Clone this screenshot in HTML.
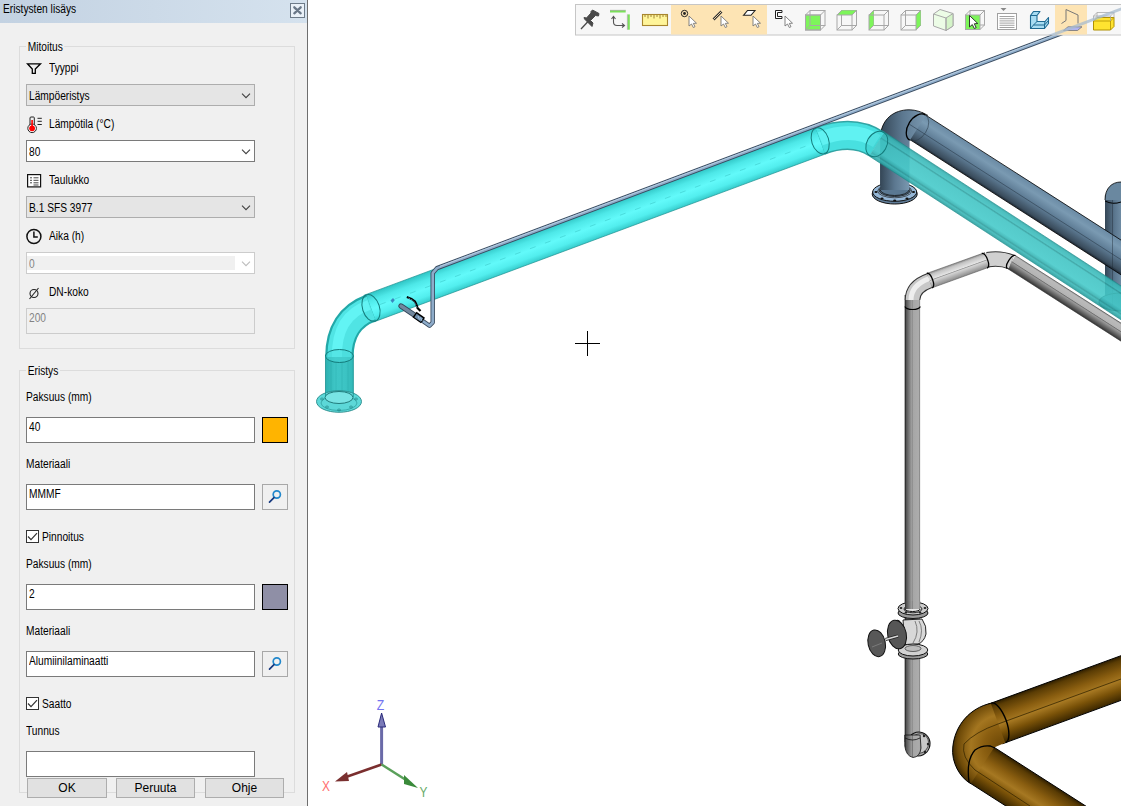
<!DOCTYPE html>
<html><head><meta charset="utf-8">
<style>
*{margin:0;padding:0;box-sizing:border-box}
html,body{width:1121px;height:806px;overflow:hidden;background:#fff;font-family:"Liberation Sans",sans-serif;font-size:12px;color:#000}
.a{position:absolute}
#panel{z-index:5;left:0;top:0;width:308px;height:806px;background:#f0f0f0;border-right:1px solid #6e6e6e}
#title{left:0;top:0;width:307px;height:23px;background:linear-gradient(90deg,#c3d2e2,#d5e2ee)}
.t{position:absolute;white-space:nowrap;line-height:14px;transform:scaleX(.85);transform-origin:0 0}
.grp{position:absolute;border:1px solid #dcdcdc}
.gl{position:absolute;background:#f0f0f0;padding:0 2px;line-height:14px;transform:scaleX(.85);transform-origin:0 0}
.cb{position:absolute;height:22px;border:1px solid #adadad;background:#e5e5e5}
.cbw{position:absolute;height:22px;border:1px solid #7a7a7a;background:#fff}
.tb{position:absolute;border:1px solid #7a7a7a;background:#fff;height:26px}
.tbd{position:absolute;border:1px solid #cccccc;background:#f0f0f0;height:26px}
.btn{position:absolute;height:20px;border:1px solid #adadad;background:#e1e1e1;text-align:center;line-height:18px}
#view{left:308px;top:0;width:813px;height:806px;background:#fff;overflow:hidden}
</style></head><body>
<div id="panel" class="a">
  <div id="title" class="a"></div>
  <div class="t" style="left:3px;top:2px">Eristysten lisäys</div>
  <div class="a" style="left:290px;top:3px;width:15px;height:15px;border:1px solid #6d7b89;background:#eaf1f8"></div>

  <div class="grp" style="left:19px;top:46px;width:276px;height:303px"></div>
  <div class="gl" style="left:26px;top:40px">Mitoitus</div>

  <div class="t" style="left:49px;top:61px">Tyyppi</div>
  <div class="cb" style="left:26px;top:84px;width:229px"></div>
  <div class="t" style="left:29px;top:89px">Lämpöeristys</div>

  <div class="t" style="left:49px;top:117px">Lämpötila (°C)</div>
  <div class="cbw" style="left:26px;top:140px;width:229px"></div>
  <div class="t" style="left:29px;top:145px">80</div>

  <div class="t" style="left:49px;top:173px">Taulukko</div>
  <div class="cb" style="left:26px;top:196px;width:229px"></div>
  <div class="t" style="left:29px;top:201px">B.1 SFS 3977</div>

  <div class="t" style="left:49px;top:229px">Aika (h)</div>
  <div class="a" style="left:26px;top:252px;width:229px;height:22px;border:1px solid #cccccc;background:#fff"></div>
  <div class="a" style="left:27px;top:256px;width:208px;height:14px;background:#f0f0f0"></div>
  <div class="t" style="left:29px;top:257px;color:#838383">0</div>

  <div class="t" style="left:49px;top:285px">DN-koko</div>
  <div class="tbd" style="left:26px;top:308px;width:229px"></div>
  <div class="t" style="left:29px;top:311px;color:#838383">200</div>

  <div class="grp" style="left:19px;top:370px;width:276px;height:423px"></div>
  <div class="gl" style="left:26px;top:364px">Eristys</div>

  <div class="t" style="left:26px;top:390px">Paksuus (mm)</div>
  <div class="tb" style="left:26px;top:417px;width:229px"></div>
  <div class="t" style="left:29px;top:420px">40</div>
  <div class="a" style="left:262px;top:417px;width:26px;height:26px;border:1px solid #000;background:#ffb400"></div>

  <div class="t" style="left:26px;top:457px">Materiaali</div>
  <div class="tb" style="left:26px;top:484px;width:229px"></div>
  <div class="t" style="left:29px;top:487px">MMMF</div>
  <div class="a" style="left:262px;top:484px;width:26px;height:26px;border:1px solid #a8a8a8;background:#f0f0f0"></div>

  <div class="a" style="left:26px;top:530px;width:13px;height:13px;border:1px solid #333;background:#fff"></div>
  <div class="t" style="left:42px;top:530px">Pinnoitus</div>

  <div class="t" style="left:26px;top:557px">Paksuus (mm)</div>
  <div class="tb" style="left:26px;top:584px;width:229px"></div>
  <div class="t" style="left:29px;top:587px">2</div>
  <div class="a" style="left:262px;top:584px;width:26px;height:26px;border:1px solid #000;background:#8f8fa6"></div>

  <div class="t" style="left:26px;top:624px">Materiaali</div>
  <div class="tb" style="left:26px;top:651px;width:229px"></div>
  <div class="t" style="left:29px;top:654px">Alumiinilaminaatti</div>
  <div class="a" style="left:262px;top:651px;width:26px;height:26px;border:1px solid #a8a8a8;background:#f0f0f0"></div>

  <div class="a" style="left:26px;top:697px;width:13px;height:13px;border:1px solid #333;background:#fff"></div>
  <div class="t" style="left:42px;top:697px">Saatto</div>

  <div class="t" style="left:26px;top:724px">Tunnus</div>
  <div class="tb" style="left:26px;top:751px;width:229px"></div>


  <svg class="a" style="left:0;top:0" width="308" height="806">
    <!-- close X -->
    <path d="M294.3,7.3 L300.7,13.3 M300.7,7.3 L294.3,13.3" stroke="#6a7888" stroke-width="2.3" stroke-linecap="round"/>
    <!-- funnel -->
    <path d="M27.5,63.8 L40.5,63.8 L35.3,69 L35.3,73.3 L32.3,73.3 L32.3,69 Z" fill="none" stroke="#000" stroke-width="1.3" stroke-linejoin="miter"/>
    <!-- thermometer -->
    <path d="M30,125 L30,118 Q30,117 31,117 L33.5,117 Q34.3,117 34.3,118 L34.3,125" fill="none" stroke="#222" stroke-width="1"/>
    <circle cx="32.1" cy="128.3" r="4.3" fill="#fff" stroke="#222" stroke-width="1"/>
    <path d="M32.1,120 L32.1,126" stroke="#f00" stroke-width="1.6"/>
    <circle cx="32.1" cy="128.3" r="2.9" fill="#f00"/>
    <path d="M37.5,118.3 L41.8,118.3 M37.5,121.3 L41.8,121.3 M37.5,124.5 L41.8,124.5" stroke="#222" stroke-width="1"/>
    <!-- table -->
    <rect x="27.6" y="174.6" width="13" height="12.3" fill="#fff" stroke="#111" stroke-width="1.2"/>
    <path d="M30,177.8 L32,177.8 M33.5,177.8 L38.5,177.8 M30,180.3 L32,180.3 M33.5,180.3 L38.5,180.3 M30,182.8 L32,182.8 M33.5,182.8 L38.5,182.8 M33.5,185 L38.5,185" stroke="#333" stroke-width="0.9"/>
    <!-- clock -->
    <circle cx="33.9" cy="236.5" r="7" fill="none" stroke="#111" stroke-width="1.5"/>
    <path d="M33.9,231.5 L33.9,237 L37.8,237" fill="none" stroke="#111" stroke-width="1.5"/>
    <!-- diameter -->
    <circle cx="34" cy="293.5" r="4" fill="none" stroke="#222" stroke-width="1.1"/>
    <path d="M29.5,299 L38.5,288" stroke="#222" stroke-width="1.1"/>
    <!-- chevrons -->
    <path d="M242,93.7 L246,97.7 L250,93.7" fill="none" stroke="#404040" stroke-width="1.1"/>
    <path d="M242,149.7 L246,153.7 L250,149.7" fill="none" stroke="#404040" stroke-width="1.1"/>
    <path d="M242,205.7 L246,209.7 L250,205.7" fill="none" stroke="#404040" stroke-width="1.1"/>
    <path d="M242,261.7 L246,265.7 L250,261.7" fill="none" stroke="#bdbdbd" stroke-width="1.1"/>
    <!-- checks -->
    <path d="M28,536.5 L31,539.7 L37,533.2" fill="none" stroke="#333" stroke-width="1.2"/>
    <path d="M28,703.5 L31,706.7 L37,700.2" fill="none" stroke="#333" stroke-width="1.2"/>
    <!-- search icons -->
    <defs><linearGradient id="mg" x1="0" y1="0" x2="1" y2="1"><stop offset="0" stop-color="#30a8e0"/><stop offset="1" stop-color="#0e2a6a"/></linearGradient></defs>
    <g stroke="url(#mg)" fill="none" stroke-width="1.7" stroke-linecap="round">
      <circle cx="276.8" cy="494.5" r="3.6" stroke="#2288cc"/><path d="M274,497.6 L269.5,502.2" stroke="#173a80"/>
      <circle cx="276.8" cy="661.5" r="3.6" stroke="#2288cc"/><path d="M274,664.6 L269.5,669.2" stroke="#173a80"/>
    </g>
  </svg>
  <div class="btn" style="left:27px;top:778px;width:80px">OK</div>
  <div class="btn" style="left:116px;top:778px;width:79px">Peruuta</div>
  <div class="btn" style="left:205px;top:778px;width:79px">Ohje</div>
</div>
<div id="view" class="a"></div>
<svg class="a" style="left:0;top:0;z-index:2" width="1121" height="806" viewBox="0 0 1121 806"><defs><linearGradient id="g1" gradientUnits="userSpaceOnUse" x1="922.0" y1="112.7" x2="906.3" y2="137.3"><stop offset="0.000" stop-color="#6a8aa4"/><stop offset="0.250" stop-color="#7a9ab2"/><stop offset="0.550" stop-color="#5f7d96"/><stop offset="0.920" stop-color="#3a4c5c"/><stop offset="1.000" stop-color="#1e2a36"/></linearGradient><linearGradient id="g2" gradientUnits="userSpaceOnUse" x1="363.7" y1="295.4" x2="373.6" y2="322.0"><stop offset="0.000" stop-color="#2fc4c4"/><stop offset="0.250" stop-color="#4ee8e8"/><stop offset="0.550" stop-color="#62fafa"/><stop offset="0.800" stop-color="#52eeee"/><stop offset="1.000" stop-color="#36cccc"/></linearGradient><linearGradient id="g3" gradientUnits="userSpaceOnUse" x1="884.5" y1="132.2" x2="869.1" y2="156.0"><stop offset="0.000" stop-color="#2a9c9c"/><stop offset="0.080" stop-color="#3ab8b8"/><stop offset="0.200" stop-color="#40c0c0"/><stop offset="0.240" stop-color="#2e9e9e"/><stop offset="0.290" stop-color="#42c4c4"/><stop offset="0.700" stop-color="#46caca"/><stop offset="0.800" stop-color="#38b6b6"/><stop offset="0.850" stop-color="#2c9c9c"/><stop offset="0.900" stop-color="#3ab8b8"/><stop offset="1.000" stop-color="#2a9c9c"/></linearGradient><linearGradient id="g4" gradientUnits="userSpaceOnUse" x1="926.9" y1="273.4" x2="932.1" y2="287.8"><stop offset="0.000" stop-color="#8a8a8a"/><stop offset="0.150" stop-color="#c4c4c4"/><stop offset="0.450" stop-color="#e4e4e4"/><stop offset="0.500" stop-color="#9a9a9a"/><stop offset="0.560" stop-color="#d4d4d4"/><stop offset="1.000" stop-color="#8a8a8a"/></linearGradient><linearGradient id="g5" gradientUnits="userSpaceOnUse" x1="1015.5" y1="255.6" x2="1007.3" y2="268.4"><stop offset="0.000" stop-color="#9a9a9a"/><stop offset="0.100" stop-color="#bababa"/><stop offset="0.420" stop-color="#b4b4b4"/><stop offset="0.470" stop-color="#707070"/><stop offset="0.530" stop-color="#9a9a9a"/><stop offset="0.900" stop-color="#4a4a4a"/><stop offset="1.000" stop-color="#333"/></linearGradient><linearGradient id="g6" gradientUnits="userSpaceOnUse" x1="988.0" y1="704.3" x2="1002.4" y2="743.8"><stop offset="0.000" stop-color="#2e1e00"/><stop offset="0.100" stop-color="#5a3c04"/><stop offset="0.350" stop-color="#8a5e10"/><stop offset="0.550" stop-color="#a67822"/><stop offset="0.750" stop-color="#7a5208"/><stop offset="1.000" stop-color="#3a2600"/></linearGradient><linearGradient id="g7" gradientUnits="userSpaceOnUse" x1="991.6" y1="745.7" x2="968.4" y2="782.0"><stop offset="0.000" stop-color="#2e1e00"/><stop offset="0.100" stop-color="#5a3c04"/><stop offset="0.350" stop-color="#8a5e10"/><stop offset="0.550" stop-color="#a67822"/><stop offset="0.750" stop-color="#7a5208"/><stop offset="1.000" stop-color="#3a2600"/></linearGradient></defs><rect x="1105" y="195" width="20" height="110" fill="url(#dbv)"/><path d="M1105,200 C1105,188 1112,182 1121,182 L1121,200 Z" fill="#6a88a0"/><path d="M1105,200 C1105,188 1112,182 1121,182" stroke="#000" stroke-width="0.8" fill="none"/><path d="M1105,201 Q1113,205 1121,202" stroke="#000" stroke-width="1" fill="none"/><ellipse cx="1121" cy="302" rx="22" ry="9" fill="#4f6c84" stroke="#000" stroke-width="1"/><polygon points="922.0,112.7 1142.9,254.1 1127.1,278.7 906.3,137.3" fill="url(#g1)" opacity="1" /><path d="M922.0,112.7L1142.9,254.1M906.3,137.3L1127.1,278.7" stroke="#000" stroke-width="0.8" fill="none" opacity="1"/><defs><linearGradient id="dbv" x1="0" x2="1" y1="0" y2="0"><stop offset="0" stop-color="#344656"/><stop offset="0.5" stop-color="#5c7890"/><stop offset="1" stop-color="#7a98b0"/></linearGradient></defs><path d="M880.2,190 L880.2,140 C880.2,118 895,109.8 909,109.8 C916,109.8 922,112 925.4,116.1 L909.6,140.7 L909.1,190 Z" fill="url(#dbv)"/><path d="M880.2,140 C880.2,118 895,109.8 909,109.8 C916,109.8 922,112 928,115.5" stroke="#000" stroke-width="0.8" fill="none"/><path d="M925.3,114.9 A9.5,14.8 32 0 0 909.7,140.1" fill="none" stroke="#000" stroke-width="1.3"/><path d="M925.3,114.9 A9.5,14.8 32 0 1 909.7,140.1" fill="none" stroke="#2a3a48" stroke-width="0.6"/><path d="M1112.5,200 L1112.5,305" stroke="#1e2a36" stroke-width="0.6" opacity="0.7"/><path d="M909,124 L1125,262.2" stroke="#2a3a48" stroke-width="0.7" opacity="0.8"/><ellipse cx="894.7" cy="194" rx="22.5" ry="10" fill="#5f7c98" stroke="#111" stroke-width="1"/><ellipse cx="894.7" cy="192" rx="22" ry="9.3" fill="#94b6d6" stroke="#111" stroke-width="1"/><ellipse cx="894.7" cy="191" rx="17" ry="6.8" fill="none" stroke="#222" stroke-width="0.7"/><ellipse cx="894.7" cy="190.5" rx="15.5" ry="6" fill="#5a7892" stroke="#111" stroke-width="0.8"/><ellipse cx="876" cy="192" rx="1.6" ry="1" fill="#111"/><ellipse cx="882" cy="198.5" rx="1.6" ry="1" fill="#111"/><ellipse cx="894.7" cy="200.5" rx="1.6" ry="1" fill="#111"/><ellipse cx="907" cy="198.5" rx="1.6" ry="1" fill="#111"/><ellipse cx="913.5" cy="192" rx="1.6" ry="1" fill="#111"/><ellipse cx="907" cy="185.5" rx="1.6" ry="1" fill="#111"/><rect x="880.2" y="150" width="29" height="40" fill="url(#dbv)"/><path d="M880.2,190 A14.5,6 0 0 0 909.1,190" fill="none" stroke="#111" stroke-width="0.8"/><polygon points="363.7,295.4 817.6,126.6 827.5,153.2 373.6,322.0" fill="url(#g2)" opacity="1" /><path d="M363.7,295.4L817.6,126.6M373.6,322.0L827.5,153.2" stroke="#1b8f8f" stroke-width="0.7" fill="none" opacity="1"/><path d="M380.0,304.5 L815.0,142.7" stroke="#2eb4b4" stroke-width="0.8" fill="none" stroke-linecap="butt" stroke-linejoin="round" opacity="0.5" stroke-dasharray="6 10"/><polygon points="884.5,132.2 1142.7,300.0 1127.3,323.9 869.1,156.0" fill="url(#g3)" opacity="0.9" /><path d="M884.5,132.2L1142.7,300.0M869.1,156.0L1127.3,323.9" stroke="#1a8a8a" stroke-width="0.7" fill="none" opacity="0.9"/><path d="M820.2,140.8" stroke="#000" stroke-width="0" fill="none" stroke-linecap="butt" stroke-linejoin="round" opacity="1"/><path d="M820.2,140.8 Q853.3,128.5 876.8,144.1" stroke="#1c9a9a" stroke-width="29" fill="none" opacity="0.9"/><path d="M820.2,140.8 Q853.3,128.5 876.8,144.1" stroke="#48e0e0" stroke-width="26" fill="none"/><path d="M820.2,138.8 Q853.3,126 876.8,141.1" stroke="#60f2f2" stroke-width="14" fill="none"/><ellipse cx="820.2" cy="140.8" rx="8.5" ry="13.5" transform="rotate(-18 820.2 140.8)" fill="none" stroke="#137a7a" stroke-width="1"/><ellipse cx="876.8" cy="144.1" rx="10" ry="13.5" transform="rotate(30 876.8 144.1)" fill="#3cc8c8" fill-opacity="0.4" stroke="#137a7a" stroke-width="1"/><defs><linearGradient id="cyv" x1="0" x2="1" y1="0" y2="0"><stop offset="0" stop-color="#2cb0b0"/><stop offset="0.35" stop-color="#3ec6c6"/><stop offset="0.7" stop-color="#3cc4c4"/><stop offset="1" stop-color="#32b8b8"/></linearGradient></defs><rect x="325.5" y="356" width="28" height="42" fill="url(#cyv)"/><path d="M331,362 L331,392 M336,362 L336,392 M342,362 L342,392 M348,362 L348,392" stroke="#2aa8a8" stroke-width="0.6" opacity="0.6"/><path d="M339.4,357 Q339.4,319.6 371,307.9" stroke="#22a8a8" stroke-width="28.5" fill="none"/><path d="M339.4,357 Q339.4,319.6 371,307.9" stroke="#50e4e4" stroke-width="24" fill="none"/><path d="M337,357 Q336,316 369,304.9" stroke="#62f4f4" stroke-width="10" fill="none"/><ellipse cx="371" cy="307.9" rx="8.5" ry="13.8" transform="rotate(-18 371 307.9)" fill="none" stroke="#137a7a" stroke-width="1"/><ellipse cx="339.4" cy="356" rx="14" ry="6.5" fill="#48d8d8" fill-opacity="0.5" stroke="#137a7a" stroke-width="1"/><ellipse cx="339" cy="401.5" rx="22.5" ry="10.8" fill="#5cd8d8" stroke="#2a8a8a" stroke-width="0.9"/><ellipse cx="339" cy="403" rx="18" ry="7.5" fill="none" stroke="#2a9a9a" stroke-width="0.7"/><ellipse cx="339" cy="397.5" rx="14" ry="6" fill="#78e4e4" stroke="#1a7070" stroke-width="0.9"/><ellipse cx="322" cy="399" rx="1.5" ry="1" fill="none" stroke="#1a7a7a" stroke-width="0.6"/><ellipse cx="327" cy="407" rx="1.5" ry="1" fill="none" stroke="#1a7a7a" stroke-width="0.6"/><ellipse cx="339" cy="410" rx="1.5" ry="1" fill="none" stroke="#1a7a7a" stroke-width="0.6"/><ellipse cx="351" cy="407" rx="1.5" ry="1" fill="none" stroke="#1a7a7a" stroke-width="0.6"/><ellipse cx="356" cy="399" rx="1.5" ry="1" fill="none" stroke="#1a7a7a" stroke-width="0.6"/><path d="M325.5,397 L325.5,356 M353.3,397 L353.3,356" stroke="#1a9090" stroke-width="0.8"/><path d="M1130.0,7.5 L437.0,268.1 L432.7,273.2 L432.7,322.5 L429.5,325.8 L421.0,319.8" stroke="#3a4c60" stroke-width="4.4" fill="none" stroke-linecap="butt" stroke-linejoin="round" opacity="1"/><path d="M1130.0,7.5 L437.0,268.1 L432.7,273.2 L432.7,322.5 L429.5,325.8 L421.0,319.8" stroke="#8eacca" stroke-width="2.6" fill="none" stroke-linecap="butt" stroke-linejoin="round" opacity="1"/><path d="M1130.0,6.9 L440.0,266.3" stroke="#b6cce0" stroke-width="1.0" fill="none" stroke-linecap="butt" stroke-linejoin="round" opacity="1"/><path d="M401,306 L421,319.5" stroke="#33465a" stroke-width="5.2" stroke-linecap="round"/><path d="M401,306 L421,319.5" stroke="#72889e" stroke-width="3.4" stroke-linecap="round"/><path d="M414.5,314.5 L423,320.5" stroke="#000" stroke-width="7"/><path d="M415.5,315.5 L422,320" stroke="#6a8aa8" stroke-width="4"/><path d="M418,316 L419.5,319.5 M420.5,317.5 L422,321" stroke="#b0d0f0" stroke-width="0.8"/><path d="M406.8,297 Q412,298.5 415,301.5 Q416.5,304 417.5,308 L420.5,311" stroke="#000" stroke-width="2.2" fill="none"/><path d="M408.5,298 Q412,299.5 414.5,302 Q416,304.5 417,308" stroke="#9cc8ee" stroke-width="0.7" fill="none" stroke-dasharray="1.5 1.5"/><path d="M390.5,300.5 L393,298 L394.8,300 L392.5,303 Z" fill="#3a88c0"/><defs><linearGradient id="grv" x1="0" x2="1" y1="0" y2="0"><stop offset="0" stop-color="#2e2e2e"/><stop offset="0.1" stop-color="#555"/><stop offset="0.44" stop-color="#9c9c9c"/><stop offset="0.47" stop-color="#767676"/><stop offset="0.53" stop-color="#a6a6a6"/><stop offset="0.9" stop-color="#acacac"/><stop offset="1" stop-color="#7a7a7a"/></linearGradient></defs><rect x="904.8" y="295" width="15.3" height="447" fill="url(#grv)"/><path d="M905.2,295 L905.2,742" stroke="#222" stroke-width="0.6"/><polygon points="926.9,273.4 985.0,252.5 990.2,266.8 932.1,287.8" fill="url(#g4)" opacity="1" /><path d="M926.9,273.4L985.0,252.5M932.1,287.8L990.2,266.8" stroke="#555" stroke-width="0.6" fill="none" opacity="1"/><polygon points="1015.5,255.6 1139.1,334.7 1130.9,347.5 1007.3,268.4" fill="url(#g5)" opacity="1" /><path d="M1015.5,255.6L1139.1,334.7M1007.3,268.4L1130.9,347.5" stroke="#333" stroke-width="0.6" fill="none" opacity="1"/><path d="M912.5,300 Q912.5,286.7 929.5,280.6" stroke="#333" stroke-width="15.5" fill="none"/><path d="M912.5,300 Q912.5,286.7 929.5,280.6" stroke="#c8c8c8" stroke-width="13.5" fill="none"/><path d="M911,300 Q911,285.2 929,278.6" stroke="#eeeeee" stroke-width="5" fill="none"/><path d="M987.6,259.7 Q1000,257.5 1011.4,262.0" stroke="#333" stroke-width="15.5" fill="none"/><path d="M987.6,259.7 Q1000,257.5 1011.4,262.0" stroke="#d0d0d0" stroke-width="13.5" fill="none"/><path d="M926.8,273.3 A3.5,7.8 -20 0 1 932.2,287.9" fill="none" stroke="#000" stroke-width="1.3"/><path d="M981.8,253.5 A3.5,7.8 -20 0 1 987.2,268.1" fill="none" stroke="#000" stroke-width="1.3"/><path d="M1015.6,255.5 A3.5,7.8 33 0 0 1007.2,268.5" fill="none" stroke="#000" stroke-width="1.3"/><path d="M905,306.5 A7.6,3 0 0 0 920.2,306.5" fill="none" stroke="#000" stroke-width="1.2"/><ellipse cx="913" cy="613" rx="15" ry="5.5" fill="#9a9a9a" stroke="#111" stroke-width="1"/><ellipse cx="913" cy="608.5" rx="15" ry="6.5" fill="#cdcdcd" stroke="#111" stroke-width="1"/><ellipse cx="913" cy="609" rx="9" ry="3.8" fill="#e6e6e6" stroke="#222" stroke-width="1"/><rect x="905" y="601" width="15.2" height="8" fill="url(#grv)"/><path d="M905,609 A7.6,2.5 0 0 0 920.2,609" fill="none" stroke="#111" stroke-width="1"/><ellipse cx="901" cy="608" rx="1.4" ry="1" fill="#222"/><ellipse cx="925" cy="608" rx="1.4" ry="1" fill="#222"/><ellipse cx="906" cy="612.5" rx="1.4" ry="1" fill="#222"/><ellipse cx="920" cy="612.5" rx="1.4" ry="1" fill="#222"/><path d="M903,620 L922,619 Q927,626 926,634 Q924,642 918,644 L905,645 Z" fill="#d8d8d8" stroke="#111" stroke-width="0.9"/><path d="M915,621 Q920,632 913,643 M919,621 Q924,630 919,642" fill="none" stroke="#666" stroke-width="0.8"/><ellipse cx="913" cy="654" rx="14.8" ry="5" fill="#9a9a9a" stroke="#111" stroke-width="1"/><ellipse cx="913" cy="650" rx="14.8" ry="6" fill="#d2d2d2" stroke="#111" stroke-width="1"/><ellipse cx="913" cy="648.5" rx="8" ry="3" fill="#bcbcbc" stroke="#333" stroke-width="0.7"/><ellipse cx="900" cy="633.5" rx="4.5" ry="13.5" transform="rotate(-12 900 633.5)" fill="#d8d8d8" stroke="#111" stroke-width="1"/><ellipse cx="897" cy="634.5" rx="9.3" ry="14.5" transform="rotate(-12 897 634.5)" fill="#565656" stroke="#111" stroke-width="1"/><path d="M885.5,639.5 L898,636" stroke="#222" stroke-width="3.2"/><path d="M885.5,639.5 L898,636" stroke="#d8d8d8" stroke-width="1.8"/><ellipse cx="876.7" cy="643.3" rx="8.6" ry="13.5" transform="rotate(-12 876.7 643.3)" fill="#585858" stroke="#111" stroke-width="1"/><path d="M872,647 L882,643" stroke="#8a8a8a" stroke-width="0.7"/><ellipse cx="918.5" cy="744" rx="11.5" ry="12" transform="rotate(20 918.5 744)" fill="#a8a8a8" stroke="#111" stroke-width="1"/><ellipse cx="919.5" cy="743.5" rx="9" ry="10" transform="rotate(20 919.5 743.5)" fill="#c8c8c8" stroke="#333" stroke-width="0.7"/><ellipse cx="924" cy="736" rx="1.2" ry="1.2" fill="#222"/><ellipse cx="928" cy="744" rx="1.2" ry="1.2" fill="#222"/><ellipse cx="925" cy="752" rx="1.2" ry="1.2" fill="#222"/><ellipse cx="917" cy="754" rx="1.2" ry="1.2" fill="#222"/><path d="M904.8,735 L904.8,746 Q906,756 913,757.5 Q920,757 921,748 L920.1,735 Z" fill="url(#grv)" stroke="#111" stroke-width="0.8"/><path d="M905,738 Q912.5,742 920,738" fill="none" stroke="#111" stroke-width="0.8"/><polygon points="988.0,704.3 1127.8,653.2 1142.2,692.6 1002.4,743.8" fill="url(#g6)" opacity="1" /><path d="M988.0,704.3L1127.8,653.2M1002.4,743.8L1142.2,692.6" stroke="#000" stroke-width="1" fill="none" opacity="1"/><polygon points="991.6,745.7 1111.6,822.6 1088.4,858.8 968.4,782.0" fill="url(#g7)" opacity="1" /><path d="M991.6,745.7L1111.6,822.6M968.4,782.0L1088.4,858.8" stroke="#000" stroke-width="1" fill="none" opacity="1"/><defs><radialGradient id="brel" gradientUnits="userSpaceOnUse" cx="1002" cy="746" r="52"><stop offset="0" stop-color="#6a4606"/><stop offset="0.35" stop-color="#8a5e10"/><stop offset="0.6" stop-color="#a47620"/><stop offset="0.85" stop-color="#6e4a08"/><stop offset="1" stop-color="#2e1e00"/></radialGradient></defs><path d="M990.8,703.3 C970,708 955,725 952.8,747 C951,762 960,778 970.9,783.6 L994.1,747.4 L1005.2,742.7 Z" fill="url(#brel)"/><path d="M990.8,703.3 C970,708 955,725 952.8,747 C951,762 960,778 970.9,783.6" fill="none" stroke="#000" stroke-width="1"/><path d="M1135,673.9 L998,724.0 Q975,732 964,744 Q961,757 975,770 L1030,806" stroke="#3a2800" stroke-width="0.8" fill="none"/><path d="M991.3,703.1 A8,21 -20 0 1 1005.7,742.6" fill="none" stroke="#000" stroke-width="1.4"/><path d="M969,782 Q966,760 975,750 Q982,745 990,746 L995,748" stroke="#000" stroke-width="1.3" fill="none"/><path d="M575,343.5 L600,343.5 M587.5,331 L587.5,356" stroke="#000" stroke-width="1"/><path d="M381.6,764.5 L381.6,724" stroke="#6a6aa8" stroke-width="3"/><path d="M378,727 L381.6,713 L385.5,727 Z" fill="#7a7ab8" stroke="#2a2a7a" stroke-width="1"/><path d="M381.6,764.5 L346,777" stroke="#7a2e2e" stroke-width="2.5"/><path d="M335,781.6 L347,772 L349,781 Z" fill="#7a3030"/><path d="M381.6,764.5 L406,780" stroke="#5aa05a" stroke-width="2.5"/><path d="M404,775 L418,788 L404,784 Z" fill="#3a8a3a"/><text transform="translate(376.8 709.8) scale(0.82 1)" font-family="Liberation Sans" font-size="15" fill="#7474f0">Z</text><text transform="translate(322 791) scale(0.85 1)" font-family="Liberation Sans" font-size="14" fill="#ff7070">X</text><text transform="translate(419.5 796.6) scale(0.85 1)" font-family="Liberation Sans" font-size="14" fill="#66aa66">Y</text></svg><svg class="a" style="left:0;top:0;z-index:4" width="1121" height="806" viewBox="0 0 1121 806"><rect x="575.5" y="4.5" width="560" height="30.5" fill="#f7f7f7" stroke="#c6c6c6" stroke-width="1"/><rect x="671" y="5" width="96" height="29.5" fill="#fde4b4"/><rect x="1055" y="5" width="32" height="29.5" fill="#fde4b4"/><path d="M581,29 L588,21.5" stroke="#4a4a4a" stroke-width="1.3"/><path d="M584.5,19 L592,26.5 L593,23 L590.5,20.5 L595.5,15.5 L598.5,16 L599,13.5 L592.5,10 L591,11.5 L591,13 L586.5,18 L584,17.5 Z" fill="#4a4a4a" stroke="#4a4a4a" stroke-width="1" stroke-linejoin="round"/><rect x="610" y="10.3" width="15.7" height="2.2" fill="#7be05a"/><path d="M610,10.3 L625.7,10.3" stroke="#999" stroke-width="0.6"/><rect x="627.6" y="14.4" width="2.2" height="15.3" fill="#7be05a"/><path d="M627.4,14.4 L627.4,29.7" stroke="#999" stroke-width="0.6"/><path d="M613.5,17 L613.5,22 Q613.5,25.5 617,25.5 L624,25.5" fill="none" stroke="#555" stroke-width="1.1"/><path d="M611.5,19 L613.5,16.5 L615.5,19 M622,23.5 L624.5,25.5 L622,27.5" fill="none" stroke="#555" stroke-width="1.1"/><rect x="642.5" y="14.5" width="25" height="11" fill="#fff59a" stroke="#a8862e" stroke-width="1.1"/><path d="M645,15 L645,17 M648,15 L648,18.5 M651,15 L651,17 M654,15 L654,18.5 M657,15 L657,17 M660,15 L660,18.5 M663,15 L663,17 M666,15 L666,17" stroke="#8a6a20" stroke-width="0.8"/><circle cx="684.5" cy="13.5" r="3.2" fill="none" stroke="#222" stroke-width="1"/><circle cx="684.5" cy="13.5" r="1.4" fill="#222"/><path d="M689,16 L689,26 L691.5,24 L693.3,27.5 L695,26.7 L693.3,23.4 L696.5,23.2 Z" fill="#fff" stroke="#777" stroke-width="0.9" stroke-linejoin="round"/><path d="M713.5,19.5 L721.5,11.5" stroke="#333" stroke-width="2.6"/><path d="M713.5,19.5 L721.5,11.5" stroke="#fde4b4" stroke-width="0.9"/><path d="M721,16 L721,26 L723.5,24 L725.3,27.5 L727,26.7 L725.3,23.4 L728.5,23.2 Z" fill="#fff" stroke="#777" stroke-width="0.9" stroke-linejoin="round"/><path d="M743.5,15.3 L747.5,10.5 L755,10.5 L751,15.3 Z" fill="#fff" stroke="#222" stroke-width="1.1"/><path d="M753,16 L753,26 L755.5,24 L757.3,27.5 L759,26.7 L757.3,23.4 L760.5,23.2 Z" fill="#fff" stroke="#777" stroke-width="0.9" stroke-linejoin="round"/><path d="M782,10.5 L775.5,10.5 L775.5,18.5 L782,18.5 L782,16.5 L777.5,16.5 L777.5,12.5 L782,12.5 Z" fill="#fff" stroke="#222" stroke-width="1"/><path d="M785,16 L785,26 L787.5,24 L789.3,27.5 L791,26.7 L789.3,23.4 L792.5,23.2 Z" fill="#fff" stroke="#777" stroke-width="0.9" stroke-linejoin="round"/><g fill="none" stroke="#a8a8a8" stroke-width="1"><rect x="805.5" y="15.0" width="15" height="15" fill="#7df55a"/><rect x="810.0" y="10.5" width="15" height="15"/><rect x="805.5" y="15.0" width="15" height="15"/><path d="M805.5,15.0 L810.0,10.5 M820.5,15.0 L825.0,10.5 M820.5,30.0 L825.0,25.5 M805.5,30.0 L810.0,25.5"/></g><g fill="none" stroke="#a8a8a8" stroke-width="1"><rect x="841.5" y="10.5" width="15" height="15"/><path d="M837,15.0 L841.5,10.5 L856.5,10.5 L852,15.0 Z" fill="#7df55a" stroke="none"/><rect x="837" y="15.0" width="15" height="15"/><path d="M837,15.0 L841.5,10.5 M852,15.0 L856.5,10.5 M852,30.0 L856.5,25.5 M837,30.0 L841.5,25.5"/></g><g fill="none" stroke="#a8a8a8" stroke-width="1"><rect x="873.5" y="10.5" width="15" height="15"/><path d="M869,15.0 L873.5,10.5 L873.5,25.5 L869,30.0 Z" fill="#7df55a" stroke="none"/><rect x="869" y="15.0" width="15" height="15"/><path d="M869,15.0 L873.5,10.5 M884,15.0 L888.5,10.5 M884,30.0 L888.5,25.5 M869,30.0 L873.5,25.5"/></g><g fill="none" stroke="#a8a8a8" stroke-width="1"><rect x="905.5" y="10.5" width="15" height="15"/><path d="M916,15.0 L920.5,10.5 L920.5,25.5 L916,30.0 Z" fill="#7df55a" stroke="none"/><rect x="901" y="15.0" width="15" height="15"/><path d="M901,15.0 L905.5,10.5 M916,15.0 L920.5,10.5 M916,30.0 L920.5,25.5 M901,30.0 L905.5,25.5"/></g><path d="M933.5,14 L940,9.5 L953,13.5 L953,26 L946,30.5 L933.5,26 Z" fill="#ecfce6" stroke="#a8a8a8" stroke-width="1"/><path d="M946,18 L953,13.5 L953,26 L946,30.5 Z" fill="#d4f4c8" stroke="#a8a8a8" stroke-width="1"/><path d="M933.5,14 L946,18 L946,30.5" fill="none" stroke="#a8a8a8" stroke-width="1"/><rect x="970" y="10.5" width="14.5" height="14.5" fill="none" stroke="#a8a8a8" stroke-width="1"/><rect x="965.5" y="15" width="14.5" height="14.5" fill="#7df55a" stroke="#a8a8a8" stroke-width="1"/><path d="M965.5,15 L970,10.5 M980,15 L984.5,10.5 M980,29.5 L984.5,25" stroke="#a8a8a8" stroke-width="1"/><path d="M969.5,15.5 L969.5,27 L972.3,24.6 L974.3,28.5 L976.2,27.6 L974.3,23.8 L977.8,23.5 Z" fill="#fff" stroke="#333" stroke-width="1" stroke-linejoin="round"/><path d="M1000.5,8 L1006.5,8 L1003.5,11 Z" fill="#888"/><rect x="997.5" y="13.5" width="19" height="16" fill="#fff" stroke="#a0a0a0" stroke-width="1"/><path d="M999.5,16.5 L1014.5,16.5 M999.5,18.7 L1014.5,18.7 M999.5,20.9 L1014.5,20.9 M999.5,23.1 L1014.5,23.1 M999.5,25.3 L1014.5,25.3 M999.5,27.5 L1014.5,27.5" stroke="#8a8a8a" stroke-width="0.8"/><path d="M1030.5,15.5 L1033.5,11.5 L1040,11.5 L1037,15.5 L1037,21.5 L1045,21.5 L1048.5,17.5 L1048.5,23.5 L1044.5,28.5 L1030.5,28.5 Z" fill="#a8dcf2" stroke="#1f6a92" stroke-width="1.1" stroke-linejoin="round"/><path d="M1030.5,15.5 L1037,15.5 M1037,21.5 L1033.5,25 L1030.5,28.5 M1044.5,28.5 L1044.5,25 L1048.5,20.5 M1033.5,25 L1044.5,25 L1045,21.5" fill="none" stroke="#1f6a92" stroke-width="1"/><path d="M1061.5,23.5 L1066,20.5 L1066,9.5 L1078,15 L1078,23.5" fill="none" stroke="#777" stroke-width="1"/><path d="M1063.5,30.5 L1068,26.8 L1082,26.8 L1077.5,30.5 Z" fill="#b0b4ee" stroke="#666" stroke-width="0.7"/><path d="M1093.5,21 L1097,17.5 L1114,17.5 L1114,26.5 L1110.5,30 L1093.5,30 Z" fill="#ffe330" stroke="#b09000" stroke-width="1"/><path d="M1093.5,21 L1110.5,21 L1114,17.5 M1110.5,21 L1110.5,30" fill="none" stroke="#b09000" stroke-width="0.8"/><path d="M1093.5,21 L1093.5,16 L1097,12.5 L1114,12.5 L1114,17.5 M1093.5,16 L1110.5,16 L1114,12.5 M1110.5,16 L1110.5,21 M1097,12.5 L1097,17.5" fill="none" stroke="#aaa" stroke-width="0.8"/><clipPath id="tbc"><rect x="576" y="5" width="560" height="30"/></clipPath><path d="M1010,51 L1125,7.5" stroke="#a8bccf" stroke-width="3" opacity="0.75" clip-path="url(#tbc)"/></svg>
</body></html>
